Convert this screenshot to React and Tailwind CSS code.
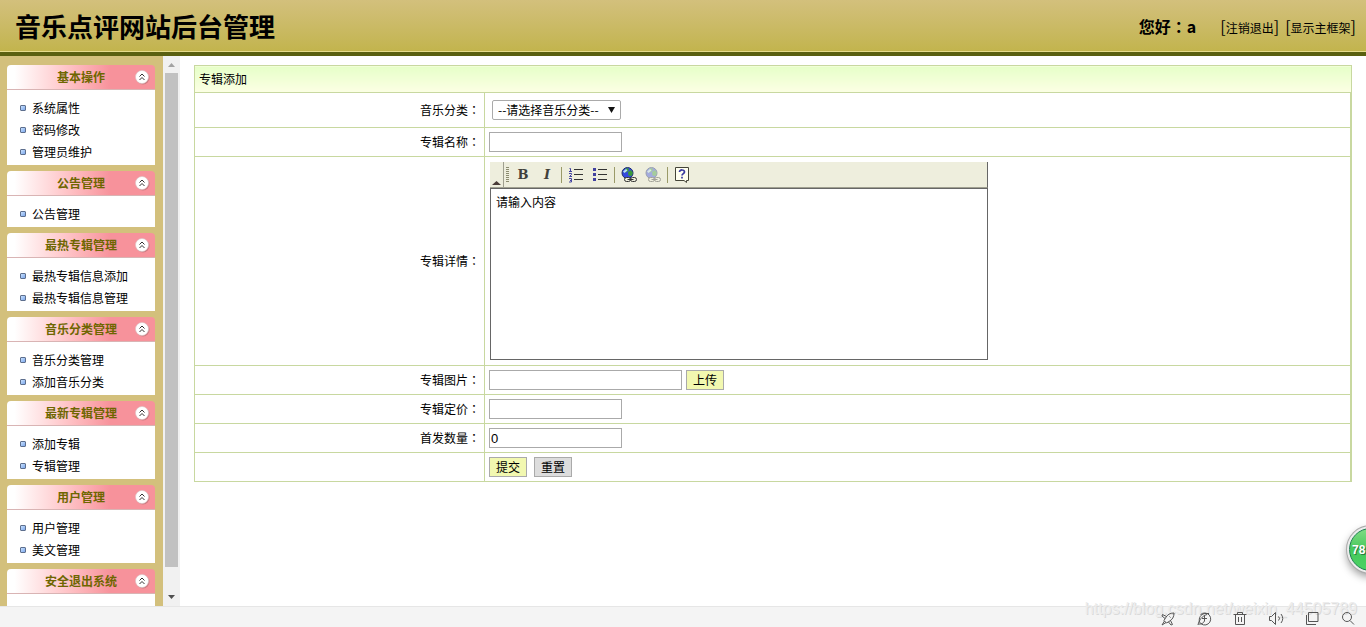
import { useState } from 'react'

const menus = [
  { title: '基本操作', items: ['系统属性', '密码修改', '管理员维护'] },
  { title: '公告管理', items: ['公告管理'] },
  { title: '最热专辑管理', items: ['最热专辑信息添加', '最热专辑信息管理'] },
  { title: '音乐分类管理', items: ['音乐分类管理', '添加音乐分类'] },
  { title: '最新专辑管理', items: ['添加专辑', '专辑管理'] },
  { title: '用户管理', items: ['用户管理', '美文管理'] },
  { title: '安全退出系统', items: [] },
]

// centred full-width colon
function Colon() {
  return <span className="font-['Noto_Sans_CJK_TC',sans-serif]">：</span>
}

function Header() {
  return (
    <header className="shrink-0 h-14 flex items-center justify-between pl-[15px] pr-[10px] border-b-4 border-[#5a6010] bg-linear-to-b from-[#d3c07c] to-[#c2b44c] shadow-[inset_0_-1px_0_#e6dc8c]">
      <h1 className="text-[26px] leading-8 font-bold">音乐点评网站后台管理</h1>
      <div className="flex items-center text-base">
        <strong className="mr-6">您好<Colon />a</strong>
        <span className="mr-[6px]">
          [<a href="#logout" className="text-xs">注销退出</a>]
        </span>
        <span>
          [<a href="#frame" className="text-xs">显示主框架</a>]
        </span>
      </div>
    </header>
  )
}

function CollapseIcon() {
  return (
    <svg width="16" height="16" viewBox="0 0 16 16" fill="none">
      <circle cx="9" cy="9" r="6.5" fill="#b06a70" opacity="0.6" />
      <circle cx="8" cy="8" r="6.5" fill="#fff" stroke="#d9c4c6" strokeWidth="0.6" />
      <path d="M5.500 7.500 8 5l2.500 2.500M5.500 11 8 8.500l2.500 2.500" stroke="#333" />
    </svg>
  )
}

function MenuGroup({ title, items }) {
  const [open, setOpen] = useState(true)

  return (
    <section>
      <button
        type="button"
        onClick={() => setOpen(!open)}
        className="relative block w-full h-[25px] rounded-t border-b border-[#d9b4b4] bg-linear-to-r from-white from-5% to-[#f7929b] to-70% text-xs leading-6 font-bold text-[#6e6600]"
      >
        {title}
        <span className="absolute right-[5px] top-1">
          <CollapseIcon />
        </span>
      </button>
      {open && (
        <ul className="bg-white pt-[7px] pb-[2px] min-h-[31px]">
          {items.map((item) => (
            <li key={item} className="h-[22px] flex items-center gap-[6px] pl-[13px]">
              <span className="w-[6px] h-[6px] rounded-[1px] border border-[#5d6f8e] bg-linear-to-br from-[#c8e0fc] to-[#7ea8ec]" />
              <a href="#menu" className="text-xs">{item}</a>
            </li>
          ))}
        </ul>
      )}
    </section>
  )
}

function ScrollBar() {
  return (
    <div className="shrink-0 w-[17px] flex flex-col items-center bg-[#f1f1f1]">
      <svg width="17" height="17"><path d="M5 11h7L8.500 7z" fill="#a3a3a3" /></svg>
      <div className="w-[13px] grow-22 bg-[#c1c1c1]" />
      <div className="grow" />
      <svg width="17" height="17"><path d="M5 6h7l-3.500 4z" fill="#505050" /></svg>
    </div>
  )
}

function Sidebar() {
  return (
    <aside className="shrink-0 flex overflow-hidden">
      <nav className="w-[163px] pl-[7px] pr-2 pt-[9px] space-y-[6px] overflow-hidden bg-[#d3c07c]">
        {menus.map((m) => (
          <MenuGroup key={m.title} title={m.title} items={m.items} />
        ))}
      </nav>
      <ScrollBar />
    </aside>
  )
}

function OrderedIcon() {
  return (
    <svg width="16" height="16" viewBox="0 0 16 16" fill="none">
      <path d="M1.500 1.500h1v3M1 4.500h3M1 6.500h2.500v1l-2 2h2.500M1 11.500h2.500v2H2h1.500v1.500H1" stroke="#4242a0" />
      <path d="M6 2.500h9M6 7.500h9M6 12.500h9" stroke="#333" />
    </svg>
  )
}

function BulletIcon() {
  return (
    <svg width="16" height="16" viewBox="0 0 16 16" fill="none">
      <path d="M1 1h3v3H1zM1 6h3v3H1zM1 11h3v3H1z" fill="#4242a0" />
      <path d="M6 2.500h9M6 7.500h9M6 12.500h9" stroke="#333" />
    </svg>
  )
}

function GlobeIcon() {
  return (
    <svg width="16" height="16" viewBox="0 0 16 16" fill="none">
      <circle cx="6.500" cy="6" r="5.500" fill="#3448e0" stroke="#20306c" />
      <path d="M4 2 7 1l1 2-2 2-2 .5zM7 5l3-2 2 3-1.500 3-3-.5z" fill="#3a9a3a" />
      <path d="M2 4.500 5 2l1.500 1.500L3.500 6z" fill="#b8dcf8" />
      <rect x="3.500" y="10.500" width="6" height="4" rx="2" fill="#eeeedd" stroke="#333" />
      <rect x="9.500" y="10.500" width="6" height="4" rx="2" fill="#eeeedd" stroke="#333" />
      <path d="M6.500 12.500h6" stroke="#333" />
    </svg>
  )
}

function HelpIcon() {
  return (
    <svg width="16" height="16" viewBox="0 0 16 16" fill="none">
      <path d="M1.500 .5h13v13h-2v2l-2.500-2H1.500z" fill="#fffff0" stroke="#444438" />
      <path d="M5.500 5c0-2.800 5-2.600 5 0C10.500 6.500 8 6.700 8 8.500M8 9.700v1.800" stroke="#3a3aa0" strokeWidth="1.700" />
    </svg>
  )
}

function ToolButton({ label, children }) {
  return (
    <button
      type="button"
      aria-label={label}
      className="w-6 h-6 flex items-center justify-center font-['DejaVu_Serif',serif] text-[13px] font-bold text-[#40403a]"
    >
      {children}
    </button>
  )
}

function Separator() {
  return <span className="w-px h-4 mx-[2px] bg-[#9a9a68]" />
}

function Editor() {
  return (
    <div className="w-[498px] ml-[1px] my-[1px]">
      <div className="h-[26px] flex items-center bg-[#eeeedd] border-r border-b border-r-[#666] border-b-[#a0a090]">
        <span className="self-stretch w-[14px] flex items-end justify-center border-r border-[#a0a090]">
          <svg width="9" height="6"><path d="M0 4h9L4.500 0z" fill="#4a3c38" /></svg>
        </span>
        <svg width="7" height="16" viewBox="0 0 7 16">
          <path d="M3.500 0v16" stroke="#8c8c70" strokeWidth="3" strokeDasharray="1 1" />
        </svg>
        <ToolButton label="粗体">B</ToolButton>
        <ToolButton label="斜体"><i>I</i></ToolButton>
        <Separator />
        <ToolButton label="编号列表"><OrderedIcon /></ToolButton>
        <ToolButton label="项目列表"><BulletIcon /></ToolButton>
        <Separator />
        <ToolButton label="插入链接"><GlobeIcon /></ToolButton>
        <ToolButton label="取消链接"><span className="opacity-40"><GlobeIcon /></span></ToolButton>
        <Separator />
        <ToolButton label="帮助"><HelpIcon /></ToolButton>
      </div>
      <textarea
        id="detail"
        defaultValue="请输入内容"
        className="block w-full h-[172px] px-[5px] py-[3px] border border-[#666] bg-white text-xs leading-5 resize-none outline-none"
      />
    </div>
  )
}

function Row({ label, htmlFor, children }) {
  return (
    <tr>
      <th scope="row" className="w-[290px] border border-[#c8d8a0] p-1 font-normal text-right">
        {label && <label htmlFor={htmlFor}>{label}<Colon /></label>}
      </th>
      <td className="border border-[#c8d8a0] p-1 shadow-[inset_-1px_0_0_#c8d8a0]">{children}</td>
    </tr>
  )
}

const inputClass = "block w-[133px] h-5 px-px border border-[#aaa] bg-white font-['Liberation_Sans',sans-serif] text-[13px] outline-none"
const buttonClass = 'w-[38px] h-5 border border-[#aaa] text-xs leading-none'

function AlbumForm() {
  return (
    <form onSubmit={(e) => e.preventDefault()}>
      <table className="w-full border-collapse text-xs">
        <thead>
          <tr>
            <th
              colSpan={2}
              className="h-[27px] px-1 border border-[#c8d8a0] bg-linear-to-b from-[#e6ffc8] to-[#fcffe4] font-normal text-left"
            >
              专辑添加
            </th>
          </tr>
        </thead>
        <tbody>
          <Row label="音乐分类" htmlFor="category">
            <div className="relative w-[129px] my-[3px] ml-[3px]">
              <select
                id="category"
                className="block appearance-none w-full h-5 pl-[5px] border border-[#aaa] rounded-xs bg-white text-xs leading-none"
              >
                <option>--请选择音乐分类--</option>
              </select>
              <svg width="7" height="6" className="absolute right-[6px] top-[7px] pointer-events-none">
                <path d="M0 0h7L3.500 6z" fill="#111" />
              </svg>
            </div>
          </Row>
          <Row label="专辑名称" htmlFor="name">
            <input id="name" type="text" className={inputClass} />
          </Row>
          <Row label="专辑详情" htmlFor="detail">
            <Editor />
          </Row>
          <Row label="专辑图片" htmlFor="picture">
            <div className="flex gap-1">
              <input
                id="picture"
                type="text"
                className="w-[193px] h-5 px-px border border-[#aaa] bg-white text-xs outline-none"
              />
              <button type="button" className={`${buttonClass} bg-[#f2f8b0]`}>上传</button>
            </div>
          </Row>
          <Row label="专辑定价" htmlFor="price">
            <input id="price" type="text" className={inputClass} />
          </Row>
          <Row label="首发数量" htmlFor="amount">
            <input id="amount" type="text" defaultValue="0" className={inputClass} />
          </Row>
          <Row>
            <div className="flex gap-[7px]">
              <button type="submit" className={`${buttonClass} bg-[#f2f8b0]`}>提交</button>
              <button type="reset" className={`${buttonClass} bg-[#ddd]`}>重置</button>
            </div>
          </Row>
        </tbody>
      </table>
    </form>
  )
}

const statusIcons = [
  {
    name: '加速',
    path: 'M14 2c-4 0-6.500 1.500-8.500 5L4 9.500 6.500 12 9 10.500c3.500-2 5-4.500 5-8.500zM6.500 5.500 2.500 3.500 2 5l3 2.500M10.500 9.500l2 4-1.500.5-2.500-3M4.500 10 2 14l4-2.500M9.500 5.500l1 1',
  },
  {
    name: '浏览器',
    path: 'M4.500 3.700a6 6 0 1 1-1 7.300M3.500 11c-1-4 1-7.500 5-8.500h4.500M2 14C3 9 6 5 11 3.500M2.500 13c3 .5 5-1 6-3M6 7.500h5M8.500 5v5',
  },
  { name: '清理', path: 'M1.500 3.500h13M5.500 3.500v-2h5v2M3.500 3.500v10h9v-10M6.500 6v5M9.500 6v5' },
  { name: '声音', path: 'M1.500 5.500h2l4-4v12l-4-4h-2zM10.500 5.500q2 2 0 4M13 3q3.500 4.500 0 9' },
  { name: '窗口', path: 'M4.500 1.500h9.500v9H4.500zM2.500 4v9.500h9.500' },
  { name: '缩放', path: 'M11.500 6a4.500 4.500 0 1 1-9 0 4.500 4.500 0 0 1 9 0zM10 9.500l4 4' },
]

function StatusBar() {
  return (
    <footer className="relative shrink-0 h-[21px] flex items-center justify-end gap-5 pt-1 pr-[10px] border-t border-[#e6e6e6] bg-[#f4f4f4]">
      <span className="absolute right-[9px] -top-2 text-base leading-5 font-['Liberation_Sans',sans-serif] text-[#ededed] [text-shadow:1px_1px_0_#dadada]">
        https://blog.csdn.net/weixin_44505789
      </span>
      {statusIcons.map((icon) => (
        <button key={icon.name} type="button" aria-label={icon.name} className="relative">
          <svg width="16" height="16" viewBox="0 0 16 16" fill="none" stroke="#555" className="block">
            <path d={icon.path} />
          </svg>
        </button>
      ))}
    </footer>
  )
}

function SpeedBall() {
  return (
    <div className="absolute -right-7 bottom-[54px] w-[47px] h-[47px] rounded-full border-2 border-[#ececec] bg-white shadow-[0_0_0_1px_#aaa,0_4px_8px_rgba(0,0,0,0.4)]">
      <div className="w-full h-full flex items-center pl-[2px] rounded-full border border-[#1c7c50] bg-linear-to-b from-[#7edc84] via-[#44c85c] to-[#4cd264] font-['Liberation_Sans',sans-serif] text-xs font-bold text-white [text-shadow:1px_1px_0_#2a7a40]">
        78
      </div>
    </div>
  )
}

export default function App() {
  return (
    <div className="relative h-screen flex flex-col overflow-hidden bg-white text-black font-['Noto_Sans_CJK_SC',sans-serif]">
      <Header />
      <div className="flex-1 min-h-0 flex">
        <Sidebar />
        <main className="flex-1 min-w-0 overflow-hidden px-[14px] pt-[9px]">
          <AlbumForm />
        </main>
      </div>
      <StatusBar />
      <SpeedBall />
    </div>
  )
}
